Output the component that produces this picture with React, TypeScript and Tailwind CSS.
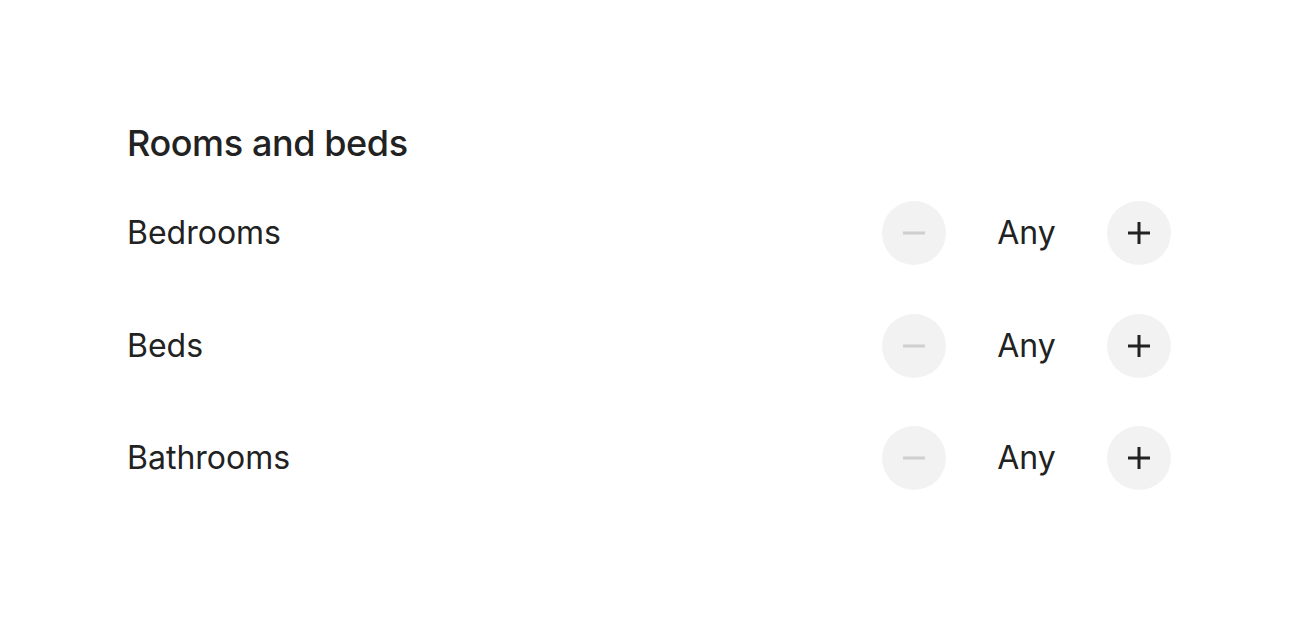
import { useState } from 'react';

interface Counter {
  label: string;
  value: number;
}

const MinusIcon = ({ disabled }: { disabled: boolean }) => (
  <svg width="22" height="22" viewBox="0 0 22 22" fill="none">
    <path d="M0 11h22" stroke={disabled ? '#cfcfcf' : '#222222'} strokeWidth="3" />
  </svg>
);

const PlusIcon = () => (
  <svg width="22" height="22" viewBox="0 0 22 22" fill="none">
    <path d="M0 11h22M11 0v22" stroke="#222222" strokeWidth="3" />
  </svg>
);

const Stepper = ({ item, onChange }: { item: Counter; onChange: (v: number) => void }) => {
  const disabled = item.value === 0;
  return (
    <div className="flex items-center justify-between h-[112.5px]">
      <span className="text-[32px] text-[#222222]">{item.label}</span>
      <div className="flex items-center">
        <button
          onClick={() => !disabled && onChange(item.value - 1)}
          className="w-16 h-16 rounded-full bg-[#f2f2f2] flex items-center justify-center"
        >
          <MinusIcon disabled={disabled} />
        </button>
        <span className="w-[161px] text-center text-[32px] text-[#222222]">
          {item.value === 0 ? 'Any' : item.value}
        </span>
        <button
          onClick={() => onChange(item.value + 1)}
          className="w-16 h-16 rounded-full bg-[#f2f2f2] flex items-center justify-center"
        >
          <PlusIcon />
        </button>
      </div>
    </div>
  );
};

export default function App() {
  const [counters, setCounters] = useState<Counter[]>([
    { label: 'Bedrooms', value: 0 },
    { label: 'Beds', value: 0 },
    { label: 'Bathrooms', value: 0 },
  ]);

  const update = (index: number, value: number) => {
    setCounters(counters.map((c, i) => (i === index ? { ...c, value } : c)));
  };

  return (
    <div className="w-[1299px] h-[618px] bg-white pl-[127px] pr-[128px] pt-[120px]" style={{ fontFamily: 'Inter, "Noto Sans", sans-serif' }}>
      <h2 className="text-[36px] leading-[46px] font-medium text-[#222222] tracking-[-0.4px]">Rooms and beds</h2>
      <div className="flex flex-col mt-[11px]">
        {counters.map((c, i) => (
          <Stepper key={c.label} item={c} onChange={(v) => update(i, v)} />
        ))}
      </div>
    </div>
  );
}
